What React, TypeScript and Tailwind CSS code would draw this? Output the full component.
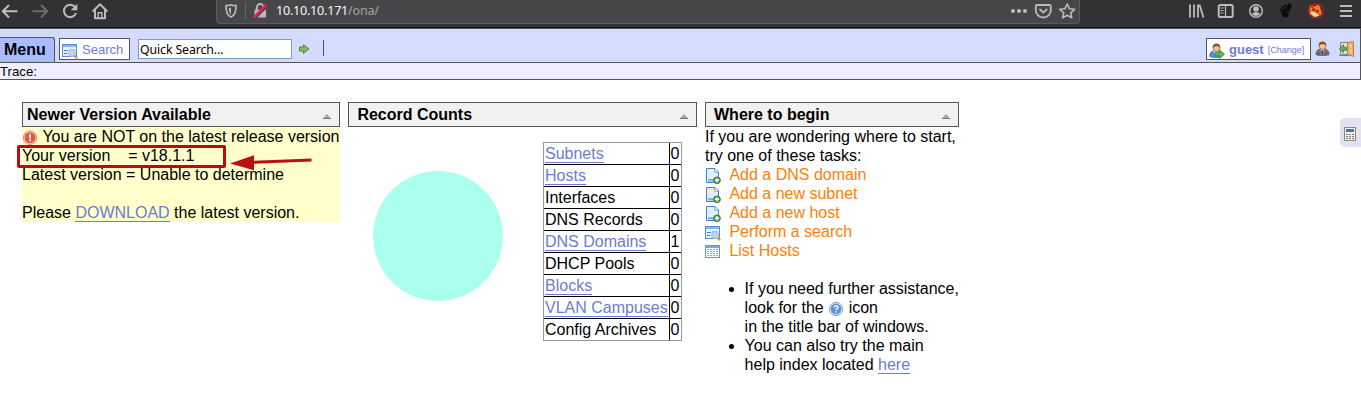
import React from 'react';

type P = { className?: string };

const SearchWindow = ({ className = '' }: P) => (
  <svg width="16" height="16" viewBox="0 0 16 16" className={`shrink-0 ${className}`}>
    <rect x=".5" y="1.5" width="14" height="12" fill="#e4f0fc" stroke="#5b8dcd" />
    <rect x="1" y="2" width="13" height="2" fill="#8cb5ea" />
    <path d="M2 7.5h4M2 10.500h3" stroke="#3f7bd0" strokeWidth="1.2" />
    <path d="M7 6.5h6" stroke="#a5bfe2" />
    <path d="M12.500 12.500l2.700 2.700" stroke="#d98a4a" strokeWidth="2" />
    <circle cx="10" cy="10" r="3.500" fill="#b3d8f2" stroke="#b3bfcd" />
  </svg>
);

const AddPage = ({ className = '' }: P) => (
  <svg width="16" height="16" viewBox="0 0 16 16" className={`shrink-0 ${className}`}>
    <path d="M1.500.5h8.500l3.500 3.500v10.500h-12z" fill="#e2effc" stroke="#4380c9" strokeLinejoin="round" />
    <path d="M9.700 1v3.300H13" fill="#fff" stroke="#7ba8df" />
    <path d="M3 11h8v2.500H3z" fill="#68bdfa" />
    <circle cx="12" cy="12.300" r="3.400" fill="#5c9a4d" stroke="#376d31" strokeWidth=".8" />
    <path d="M12 10.200v4.200M9.900 12.300h4.200" stroke="#fff" strokeWidth="1.400" />
  </svg>
);

const ListIcon = ({ className = '' }: P) => (
  <svg width="16" height="16" viewBox="0 0 16 16" className={`shrink-0 ${className}`}>
    <rect x=".5" y="1.500" width="14" height="12" fill="#fff" stroke="#6c93cb" />
    <rect x="1" y="2" width="13" height="2" fill="#7da8e3" />
    <path d="M2 5.500h11M2 7.500h11M2 9.500h11M2 11.500h11" stroke="#8ea0ba" strokeDasharray="2 1" />
  </svg>
);

const AlertIcon = () => (
  <svg width="16" height="16" viewBox="0 0 16 16" className="shrink-0">
    <circle cx="8" cy="8.700" r="6.700" fill="#fbd9ce" stroke="#e58272" />
    <circle cx="8" cy="8.700" r="5.500" fill="#e4584a" />
    <path d="M7.100 5.200h1.800v4.200H7.100zM7.100 10.500h1.800v1.700H7.100z" fill="#fff" />
  </svg>
);

const HelpIcon = () => (
  <svg width="16" height="16" viewBox="0 0 16 16" className="relative top-px inline-block align-text-bottom">
    <circle cx="8" cy="8" r="6.700" fill="#dceafa" stroke="#86a9d6" />
    <circle cx="8" cy="8" r="5.400" fill="#5f91cf" />
    <path d="M6 6.600C6 4.200 10 4.300 10 6.500 10 7.700 8.100 7.700 8.100 9.300M8.100 10.300v1.500" fill="none" stroke="#fff" strokeWidth="1.400" />
  </svg>
);

const Person = ({ suit = false }: { suit?: boolean }) => (
  <svg width="16" height="16" viewBox="0 0 16 16" className="shrink-0">
    {suit ? (
      <>
        <path d="M1 13.800C.8 10.300 2.500 8.500 5 8h5c2.500.5 4.300 2.300 4 5.800-3 1-10 1-13 0z" fill="#77777b" stroke="#4d4d52" strokeWidth=".7" />
        <path d="M5.500 8.200L7.500 11l2-2.800z" fill="#f3f3f3" />
        <path d="M7.500 9v4.500M3.800 11v3M11.200 11v3" stroke="#444" strokeWidth=".9" />
      </>
    ) : (
      <>
        <path d="M.8 13.500C.5 9.500 3 8 5 8h4c2.500 0 4 2 4 5.500-3 1.400-9 1.400-12.200 0z" fill="#4b8fe3" stroke="#2c65ac" strokeWidth=".7" />
        <path d="M4.500 8.200L6.800 13l3-4.800z" fill="#f7fbff" />
      </>
    )}
    <circle cx="7.500" cy="4.900" r="3.400" fill="#f4c696" stroke="#a05d2b" strokeWidth=".7" />
    <path d="M3.800 5.300C2.500-1 12.500-1 11.200 5.300 10.500 4 9.500 3 7.800 3.200 6 3 4.800 4 3.800 5.300z" fill="#86502b" />
    {!suit && <path d="M6 9.500h4.500V7l5 4.200-5 4.200v-2.700H6z" fill="#64b94b" stroke="#398532" strokeWidth=".8" />}
  </svg>
);

const Door = () => (
  <svg width="17" height="16" viewBox="0 0 17 16" className="shrink-0">
    <path d="M2.500 1.500h9v12h-9z" fill="#dfe0dc" stroke="#8b806b" />
    <path d="M9.500 1.500L15.500.5v15l-6-2z" fill="#e5b06e" stroke="#ba8648" />
    <path d="M11.500 3.500l2.500-.4v3.400h-2.500zM11.500 8.500H14v4l-2.500-.5z" fill="#f2cb96" />
    <path d="M8.500 6.200H5.500V3.800L1.200 7.800l4.300 4V9.300h3z" fill="#65ac5b" stroke="#3b8042" strokeWidth=".8" />
    <path d="M1 14.500h10" stroke="#7d8582" />
  </svg>
);

const GoArrow = () => (
  <svg width="11" height="10" viewBox="0 0 11 10" className="ml-[7px]">
    <path d="M.5 3h4V.700L10 5 4.500 9.300V7h-4z" fill="#85b865" stroke="#468c30" />
  </svg>
);

function BrowserBar() {
  return (
    <div className="flex h-[28px] shrink-0 items-start border-b border-[#0c0c0d] bg-[#323234] text-[#b9b9ba]">
      <svg width="216" height="27" viewBox="0 0 216 27" fill="none" stroke="#bdbdbe" strokeWidth="2" className="shrink-0">
        <path d="M17.500 11.200H3M9 5l-6.200 6.200L9 17.500" />
        <path d="M32.500 11.200H47M41 5l6.200 6.200L41 17.500" stroke="#6d6d6f" />
        <path d="M75.300 7.500A6.200 6.200 0 1 0 76 13" />
        <path d="M77.300 3.700v6.600h-6.600z" fill="#bdbdbe" stroke="none" />
        <path d="M92.700 11.500L100 4.300l7.300 7.200M95 10v8.200h10V10" strokeLinejoin="round" />
        <path d="M98.200 18v-5.300h3.600V18" strokeWidth="1.400" />
      </svg>
      <div className="flex h-[24px] w-[864px] shrink-0 items-start rounded-b-[4px] border border-t-0 border-[#5c5c60] bg-[#474749]">
        <svg width="54" height="23" viewBox="0 0 54 23" fill="none" className="shrink-0">
          <path d="M14 4.700c-2 .9-3.500 1-5 1C9 11.800 10.500 15.700 14 17c3.500-1.300 5-5.200 5-11.300-1.500 0-3-.1-5-1z" stroke="#b9b9bb" strokeWidth="1.700" />
          <path d="M14 7.500c-.8.4-1.500.6-2.200.6.1 3 .7 5.300 2.200 6.300z" fill="#b9b9bb" />
          <path d="M28.500 2v17" stroke="#66666a" />
          <path d="M39.800 10V7.500a3.400 3.400 0 0 1 6.800 0V10" stroke="#b9b9bb" strokeWidth="2" />
          <rect x="37.500" y="9.500" width="11.500" height="8" rx="1" fill="#b9b9bb" />
          <path d="M38.500 18L51 5.300" stroke="#474749" strokeWidth="2" />
          <path d="M36.500 17.500L49.500 4.200" stroke="#ff174f" strokeWidth="2" />
        </svg>
        <div className="ml-[5px] flex-1 whitespace-nowrap font-['Noto_Sans','Open_Sans',sans-serif] text-[12.6px] leading-[22px] tracking-[-0.24px] text-[#f8f8f8]">
          10.10.10.171<span className="text-[#a3a3a5]">/ona/</span>
        </div>
        <svg width="71" height="23" viewBox="0 0 71 23" fill="none" stroke="#bcbcbd" strokeWidth="1.800" className="shrink-0">
          <g fill="#bcbcbd" stroke="none"><circle cx="5" cy="11" r="2" /><circle cx="11" cy="11" r="2" /><circle cx="17" cy="11" r="2" /></g>
          <path d="M29 5h12.500q1.300 0 1.300 1.300V10a7.500 7.500 0 0 1-15 0V6.300Q27.800 5 29 5zM31.500 9l3.800 3.600L39.200 9" strokeLinejoin="round" />
          <path d="M59.200 4l2.200 4.700 5.200.6-3.900 3.500 1.100 5.100-4.600-2.600-4.600 2.600 1.100-5.100L51.800 9.300l5.200-.6z" strokeWidth="1.600" strokeLinejoin="round" />
        </svg>
      </div>
      <svg width="281" height="27" viewBox="0 0 281 27" fill="none" stroke="#bcbcbd" strokeWidth="2" className="shrink-0">
        <path d="M110 4.500v13M114 4.500v13M118 4.500v13M119.500 4.800L123.500 17.500" strokeWidth="1.800" />
        <rect x="138.700" y="5" width="14" height="12" rx="1.500" />
        <path d="M145.500 5v12M140.500 8h3M140.500 10.500h3M140.500 13h3" strokeWidth="1.200" />
        <circle cx="176" cy="11" r="6.300" strokeWidth="1.500" />
        <circle cx="176" cy="9" r="2.800" fill="#bcbcbd" stroke="none" />
        <path d="M171.500 14q4.500-4 9 0-4.500 4-9 0z" fill="#bcbcbd" stroke="none" />
        <g fill="#0c0c0c" stroke="none">
          <path d="M201 12c0-4 9-5 9-2 0 2-3.200 2-3 3.500 1-.8 2.300 0 1.500 1.800-1.500 3.500-6.500 3-7.500-3.300z" />
          <ellipse cx="209.300" cy="6.200" rx="2.200" ry="2.900" transform="rotate(20 209.300 6.200)" />
          <ellipse cx="205.500" cy="6" rx="1.200" ry="1.800" /><ellipse cx="202.700" cy="7.200" rx="1.100" ry="1.600" /><ellipse cx="200.600" cy="9.500" rx=".9" ry="1.300" />
        </g>
        <path d="M229 8.500l1-4 4 2 5-2 2 6 1 4-5 2-7-2z" fill="#e98222" stroke="none" />
        <path d="M230 13q3-3 5 0l5-.500-1 3.500-5 1z" fill="#f6d2a2" stroke="none" />
        <path d="M232.500 10h1.500M237 11h1.500" stroke="#442513" />
        <circle cx="236" cy="11" r="7.200" stroke="#cf1919" strokeWidth="1.300" />
        <path d="M231 6l10 10" stroke="#d51c1c" strokeWidth="1.300" />
        <path d="M260 6h12M260 11h12M260 16h12" />
      </svg>
    </div>
  );
}

function TitleBar({ title, pad }: { title: string; pad: string }) {
  return (
    <div className={`flex h-[25px] items-center justify-between border border-[#555] bg-[#f1f1f1] pr-[8px] font-bold ${pad}`}>
      <span>{title}</span>
      <svg width="8" height="5" viewBox="0 0 8 5" className="mt-[4px]">
        <path d="M4 0l4 4.500H0z" fill="#a5a5a5" /><path d="M0 4.500h8" stroke="#777" />
      </svg>
    </div>
  );
}

const Link = ({ children }: { children: React.ReactNode }) => (
  <a className="border-b border-[#6b7dd1] text-[#6b7dd1]">{children}</a>
);

const counts: [string, number, boolean][] = [
  ['Subnets', 0, true], ['Hosts', 0, true], ['Interfaces', 0, false],
  ['DNS Records', 0, false], ['DNS Domains', 1, true], ['DHCP Pools', 0, false],
  ['Blocks', 0, true], ['VLAN Campuses', 0, true], ['Config Archives', 0, false],
];

const tasks = [
  { label: 'Add a DNS domain', Icon: AddPage },
  { label: 'Add a new subnet', Icon: AddPage },
  { label: 'Add a new host', Icon: AddPage },
  { label: 'Perform a search', Icon: SearchWindow },
  { label: 'List Hosts', Icon: ListIcon },
];

export default function App() {
  return (
    <div className="relative flex h-[400px] w-[1361px] flex-col overflow-hidden bg-white font-['Liberation_Sans',Arial,sans-serif] text-[16px] leading-[19px] text-black">
      <BrowserBar />
      <div className="flex h-[35px] shrink-0 items-start border-y border-r border-[#555] bg-[#d3dbff]">
        <div className="mt-[8px] flex h-[25px] w-[55px] items-center rounded-tr-[3px] border border-b-0 border-l-0 border-[#555] bg-[#aabbff] pb-[2px] pl-[4px] font-bold">Menu</div>
        <div className="ml-[4px] mt-[9px] flex h-[22px] w-[71px] items-center border border-[#555] bg-white pl-[2px] text-[13px] text-[#6b7dd1]">
          <SearchWindow className="mt-[4px]" /><span className="ml-[4px]">Search</span>
        </div>
        <div className="ml-[8px] mt-[10px] h-[20px] w-[154px] whitespace-nowrap border border-[#7f9db9] bg-white pl-[1px] font-['Noto_Sans','Open_Sans',sans-serif] text-[12.3px] leading-[19px] tracking-[-0.1px]">Quick Search...</div>
        <div className="mt-[15px]"><GoArrow /></div>
        <div className="ml-[13px] mt-[11px] h-[16px] w-px bg-[#4d5368]" />
        <div className="ml-auto mt-[9px] flex h-[22px] w-[105px] items-center whitespace-nowrap border border-[#555] bg-white pl-[2px] text-[#6b7dd1]">
          <div className="mt-[4px]"><Person /></div>
          <b className="ml-[4px] text-[13px]">guest</b>
          <span className="ml-[4px] mt-[3px] text-[9px]">[Change]</span>
        </div>
        <div className="ml-[4px] mt-[12px]"><Person suit /></div>
        <div className="ml-[7px] mr-[5px] mt-[12px]"><Door /></div>
      </div>
      <div className="h-[17px] shrink-0 border-b border-r border-[#555] bg-[#eeeeff] text-[13.2px] leading-[17px]">Trace:</div>

      <main className="flex items-start gap-[8px] pl-[22px] pt-[22px]">
        <section className="w-[318px] whitespace-nowrap">
          <TitleBar title="Newer Version Available" pad="pl-[4px]" />
          <div className="h-[95px] bg-[#ffffcc]">
            <div className="flex items-center gap-[4.400px]"><AlertIcon /><span>You are NOT on the latest release version</span></div>
            <div>Your version &nbsp;&nbsp; = v18.1.1</div>
            <div>Latest version = Unable to determine</div>
            <br />
            <div>Please <Link>DOWNLOAD</Link> the latest version.</div>
          </div>
        </section>

        <section className="w-[349px]">
          <TitleBar title="Record Counts" pad="pl-[8.400px]" />
          <div className="flex items-start pl-[25px] pt-[15px]">
            <div className="mt-[29px] h-[130px] w-[130px] shrink-0 rounded-full bg-[#aaffee]" />
            <div className="ml-[40px] w-[139px] border border-[#999]">
              {counts.map(([name, n, linked], i) => (
                <div key={name} className={`flex ${i === counts.length - 1 ? 'h-[21px]' : 'h-[22px] border-b border-black'}`}>
                  <div className="w-[126px] whitespace-nowrap border-r border-black pl-[1px] leading-[21px]">{linked ? <Link>{name}</Link> : name}</div>
                  <div className="pl-[0.500px] leading-[21px]">{n}</div>
                </div>
              ))}
            </div>
          </div>
        </section>

        <section className="w-[254px] whitespace-nowrap">
          <TitleBar title="Where to begin" pad="pl-[8px]" />
          <div>If you are wondering where to start,</div>
          <div>try one of these tasks:</div>
          {tasks.map(({ label, Icon }) => (
            <div key={label} className="flex h-[19px] items-center gap-[8.400px] text-[#ff8000]">
              <Icon className="mt-[3px]" /><span>{label}</span>
            </div>
          ))}
          <ul className="mt-[19px] list-disc pl-[39.600px]">
            <li>If you need further assistance,
              <div className="h-[19px]">look for the <HelpIcon /> icon</div>
              <div>in the title bar of windows.</div>
            </li>
            <li>You can also try the main<br />help index located <Link>here</Link></li>
          </ul>
        </section>
      </main>

      <div className="absolute left-[17px] top-[145px] h-[23px] w-[209px] rounded-[2px] border-[3px] border-[#b90b10]" />
      <svg width="84" height="20" viewBox="0 0 84 20" className="absolute left-[229px] top-[152px]">
        <path d="M20 10.500L82.500 8" stroke="#bd0e13" strokeWidth="3" /><path d="M1 11.500L25 3.200v15z" fill="#bd0e13" />
      </svg>
      <div className="absolute right-0 top-[118px] flex h-[29px] w-[21px] items-center rounded-l-[5px] bg-[#e2e1ef] pl-[4px]">
        <svg width="12" height="14" viewBox="0 0 12 14" className="mt-[2px]">
          <rect x=".5" y=".5" width="11" height="13" fill="#f4f4f4" stroke="#888" />
          <path d="M2 2h8v3H2z" fill="#4575bd" />
          <path d="M2 7.500h8M2 9.500h8M2 11.500h8" stroke="#777" strokeDasharray="2 1" /><path d="M8 7.500h2M8 9.500h2" stroke="#cf5c5c" />
        </svg>
      </div>
    </div>
  );
}
